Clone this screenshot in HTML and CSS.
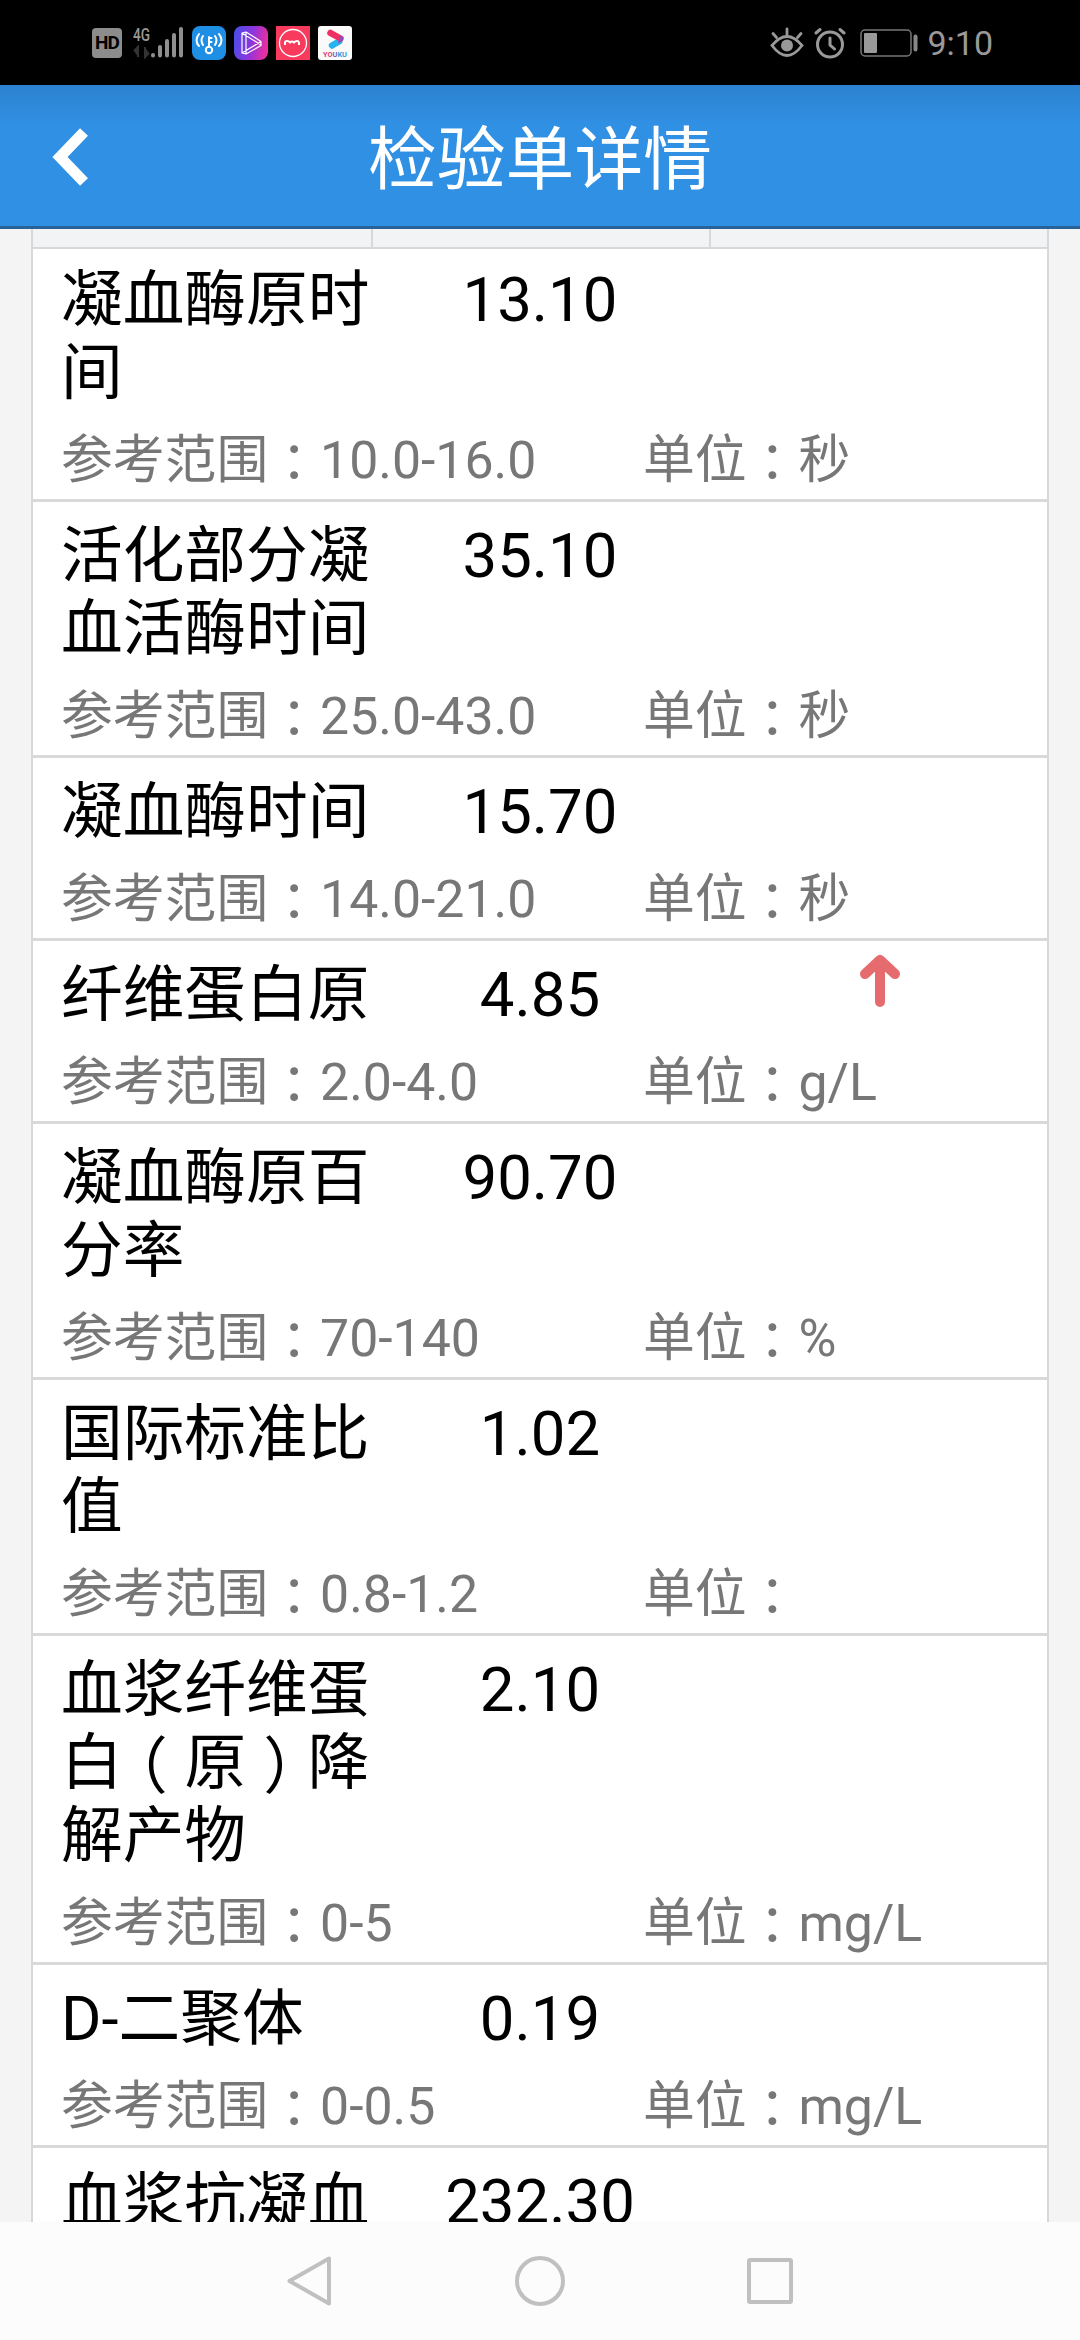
FILE: index.html
```html
<!DOCTYPE html>
<html lang="zh-CN">
<head>
    <meta charset="UTF-8">
    <meta name="viewport" content="width=device-width, initial-scale=1.0">
    <title>检验单详情</title>
    <link rel="stylesheet" href="styles.css">
</head>
<body>

    <div class="status">
        <div class="status-left">
            <span class="hd">HD</span>
            <svg class="signal" width="50" height="42" viewBox="0 -4 50 42">
                <text x="0" y="15" class="net" textLength="17" lengthAdjust="spacingAndGlyphs">4G</text>
                <path d="M1 25l4-4v10M12 21v10l4-4" fill="#333" stroke="#333" stroke-width="2"/>
                <path d="M20 29v0.5M27 21v8.5M34 15v14.5M41 9v20.5M48 3v26.5" stroke="#8f8f8f" stroke-width="4" stroke-linecap="round"/>
            </svg>
            <svg class="app" width="34" height="34" viewBox="0 0 34 34">
                <rect width="34" height="34" rx="8" fill="#1f8fe6"/>
                <g fill="none" stroke="#fff" stroke-width="2" stroke-linecap="round">
                    <circle cx="17" cy="24" r="3.2"/>
                    <path d="M17 20.500V11M17 12h2.500M17 16h2.500M11 10q-3 4 0 9M23 10q3 4 0 9M7 8q-5 6.500 0 12M27 8q5 6.500 0 12"/>
                </g>
            </svg>
            <svg class="app" width="34" height="34" viewBox="0 0 34 34">
                <defs>
                    <linearGradient id="video" x1="0" y1="0.300" x2="1" y2="0.500">
                        <stop offset="0" stop-color="#4b4de8"/>
                        <stop offset="0.500" stop-color="#8a35e0"/>
                        <stop offset="1" stop-color="#ee2f9c"/>
                    </linearGradient>
                </defs>
                <rect width="34" height="34" rx="8" fill="url(#video)"/>
                <path d="M8 7l4-1 15 9.500v4L12 28l-4-1zM12 6v22M8 27l19-11.500M8 7l19 12" fill="none" stroke="#fff" stroke-width="1.200" stroke-linejoin="round"/>
            </svg>
            <svg class="app" width="34" height="34" viewBox="0 0 34 34">
                <rect width="34" height="34" fill="#f83a5c"/>
                <circle cx="17" cy="17" r="13.500" fill="none" stroke="#fff" stroke-width="1.300"/>
                <path d="M9 19v-2.500q0-1.500 2-1.500t3 1.500q2-2 4 0 1.500-1.500 3-1.500t2 1.500v2.500" fill="none" stroke="#fff" stroke-width="2"/>
            </svg>
            <svg class="app" width="34" height="34" viewBox="0 0 34 34">
                <rect width="34" height="34" rx="3" fill="#fafafa"/>
                <path d="M14 19.500l7-4" stroke="#27b4ee" stroke-width="6.500" stroke-linecap="round"/>
                <path d="M12.500 7l10 5.500" stroke="#ee2f63" stroke-width="6.500" stroke-linecap="round"/>
                <path d="M22 9.500a3.500 3.500 0 0 1 2 6l-4 2z" fill="#8a4fc0"/>
                <text x="5" y="31" class="youku" textLength="24" lengthAdjust="spacingAndGlyphs"><tspan fill="#e2416f">YO</tspan><tspan fill="#7a5cb0">U</tspan><tspan fill="#2f9fdb">KU</tspan></text>
            </svg>
        </div>
        <div class="status-right">
            <svg width="34" height="32" viewBox="0 0 34 32" fill="none" stroke="#999" stroke-width="2.800" stroke-linecap="round">
                <path d="M2 18.500Q17 0.500 32 18.500Q17 38.500 2 18.500zM17 8V2M6.500 10.500L3 6.500M27.500 10.500L31 6.500"/>
                <circle cx="17" cy="18.500" r="6" fill="#999" stroke="none"/>
            </svg>
            <svg class="alarm" width="32" height="32" viewBox="0 0 32 32" fill="none" stroke="#999" stroke-width="3" stroke-linecap="round">
                <circle cx="16" cy="17.500" r="12.500"/>
                <path d="M16 11v7l4.500 4M2 6l4-3.500M30 6l-4-3.500"/>
            </svg>
            <svg class="battery" width="58" height="28" viewBox="0 0 58 28">
                <rect x="1" y="1" width="50" height="26" rx="4" fill="none" stroke="#777" stroke-width="1.500"/>
                <rect x="4" y="4" width="13" height="20" rx="1" fill="#999"/>
                <rect x="53.500" y="5.500" width="4" height="17" rx="2" fill="#888"/>
            </svg>
            <span class="clock">9:10</span>
        </div>
    </div>

    <div class="header">
        <svg class="back" width="40" height="60" viewBox="0 0 40 60">
            <path d="M33 5L9 30L33 55" fill="none" stroke="#fff" stroke-width="11"/>
        </svg>
        <h1>检验单详情</h1>
    </div>

    <div class="content">
        <div class="table-head"><span></span><span></span><span></span></div>

        <div class="item">
            <div class="result"><span class="name">凝血酶原时间</span><span class="value">13.10</span></div>
            <div class="detail"><span>参考范围<i lang="zh-TW">：</i>10.0-16.0</span><span>单位<i lang="zh-TW">：</i>秒</span></div>
        </div>
        <div class="item">
            <div class="result"><span class="name">活化部分凝血活酶时间</span><span class="value">35.10</span></div>
            <div class="detail"><span>参考范围<i lang="zh-TW">：</i>25.0-43.0</span><span>单位<i lang="zh-TW">：</i>秒</span></div>
        </div>
        <div class="item">
            <div class="result"><span class="name">凝血酶时间</span><span class="value">15.70</span></div>
            <div class="detail"><span>参考范围<i lang="zh-TW">：</i>14.0-21.0</span><span>单位<i lang="zh-TW">：</i>秒</span></div>
        </div>
        <div class="item">
            <div class="result">
                <span class="name">纤维蛋白原</span><span class="value">4.85</span>
                <svg class="arrow" width="44" height="56" viewBox="0 0 44 56">
                    <path d="M22 7V49M7 21L22 7L37 21" fill="none" stroke="#e56b6e" stroke-width="10" stroke-linecap="round" stroke-linejoin="round"/>
                </svg>
            </div>
            <div class="detail"><span>参考范围<i lang="zh-TW">：</i>2.0-4.0</span><span>单位<i lang="zh-TW">：</i>g/L</span></div>
        </div>
        <div class="item">
            <div class="result"><span class="name">凝血酶原百分率</span><span class="value">90.70</span></div>
            <div class="detail"><span>参考范围<i lang="zh-TW">：</i>70-140</span><span>单位<i lang="zh-TW">：</i>%</span></div>
        </div>
        <div class="item">
            <div class="result"><span class="name">国际标准比值</span><span class="value">1.02</span></div>
            <div class="detail"><span>参考范围<i lang="zh-TW">：</i>0.8-1.2</span><span>单位<i lang="zh-TW">：</i></span></div>
        </div>
        <div class="item">
            <div class="result"><span class="name">血浆纤维蛋白<i class="open" lang="zh-TW">（</i>原<i class="close" lang="zh-TW">）</i>降解产物</span><span class="value">2.10</span></div>
            <div class="detail"><span>参考范围<i lang="zh-TW">：</i>0-5</span><span>单位<i lang="zh-TW">：</i>mg/L</span></div>
        </div>
        <div class="item">
            <div class="result"><span class="name">D-二聚体</span><span class="value">0.19</span></div>
            <div class="detail"><span>参考范围<i lang="zh-TW">：</i>0-0.5</span><span>单位<i lang="zh-TW">：</i>mg/L</span></div>
        </div>
        <div class="item">
            <div class="result"><span class="name">血浆抗凝血</span><span class="value">232.30</span></div>
        </div>
    </div>

    <div class="navbar">
        <svg width="50" height="54" viewBox="0 0 50 54"><path d="M44 4.500V49.500L4.500 27z"/></svg>
        <svg width="50" height="54" viewBox="0 0 50 54"><circle cx="25" cy="27" r="23"/></svg>
        <svg width="50" height="54" viewBox="0 0 50 54"><rect x="4" y="6" width="42" height="42" rx="1"/></svg>
    </div>

</body>
</html>
```
FILE: styles.css
```css
* {
    box-sizing: border-box;
}
body {
    margin: 0;
    width: 1080px;
    height: 2340px;
    overflow: hidden;
    display: flex;
    flex-direction: column;
    font-family: Roboto, "Noto Sans CJK SC", sans-serif;
    background-color: #f4f4f4;
    color: #000;
}
svg {
    display: block;
    flex: none;
}
/* status bar */
.status {
    flex: none;
    height: 85px;
    padding: 0 87px 0 92px;
    display: flex;
    justify-content: space-between;
    align-items: center;
    background-color: #000;
}
.status-left, .status-right {
    display: flex;
    align-items: center;
}
.status-left {
    gap: 8px;
}
.hd {
    width: 30px;
    height: 30px;
    border-radius: 4px;
    background-color: #8c8c8c;
    color: #000;
    font: bold 19px/30px Roboto, sans-serif;
    letter-spacing: -1px;
    text-align: center;
}
.signal {
    margin-left: 3px;
    margin-right: 1px;
}
.net {
    font: 500 19px Roboto, sans-serif;
    fill: #999;
}
.youku {
    font: bold 7px Roboto, sans-serif;
}
.alarm {
    margin-left: 10px;
}
.battery {
    margin-left: 14px;
}
.clock {
    margin-left: 9px;
    font-size: 34px;
    line-height: 40px;
    color: #999;
}
/* header */
.header {
    flex: none;
    height: 144px;
    padding: 3px 51px 0;
    display: grid;
    grid-template-columns: 40px 1fr 40px;
    align-items: center;
    border-bottom: 3px solid #276299;
    background: linear-gradient(#2c82d0, #3090e4 40px);
    color: #fff;
}
.header h1 {
    margin: 0;
    padding-top: 7px;
    font-size: 68.8px;
    line-height: 80px;
    font-weight: 400;
    text-align: center;
}
/* list */
.content {
    flex: 1;
    min-height: 0;
    overflow: hidden;
    margin: 0 31px;
    border: solid #d8d8d8;
    border-width: 0 2px;
    background-color: #fff;
}
.table-head {
    display: grid;
    grid-template-columns: 1fr 1fr 1fr;
    height: 20px;
    margin-bottom: -3px;
    border-bottom: 2px solid #d8d8d8;
    background-color: #f2f3f4;
}
.table-head span + span {
    border-left: 2px solid #d8d8d8;
}
.item {
    padding: 18px 0 8px;
    border-bottom: 3px solid #d9d9d9;
}
.result {
    display: grid;
    grid-template-columns: 1fr 1fr 1fr;
    font-size: 61.7px;
    line-height: 73px;
}
.name {
    padding-left: 28px;
    word-break: break-all;
}
.value {
    text-align: center;
}
.arrow {
    justify-self: center;
    margin: -6px 0 0 3px;
}
.detail {
    display: grid;
    grid-template-columns: 582px 1fr;
    margin-top: 20px;
    padding-left: 28px;
    font-size: 51.8px;
    line-height: 61px;
    color: #777;
}
/* full-width punctuation sits in the middle of its box */
i {
    display: inline-block;
    font-family: "Noto Sans CJK TC", sans-serif;
    font-style: normal;
    line-height: 0.9;
    vertical-align: -0.07em;
}
.open {
    margin: 0 0.27em 0 -0.27em;
}
.close {
    margin: 0 -0.28em 0 0.28em;
}
/* navigation */
.navbar {
    flex: none;
    height: 118px;
    display: flex;
    justify-content: center;
    align-items: center;
    gap: 180px;
    background-color: #fcfcfc;
}
.navbar svg {
    fill: none;
    stroke: #c0c0c0;
    stroke-width: 4px;
    stroke-linejoin: round;
}
```
